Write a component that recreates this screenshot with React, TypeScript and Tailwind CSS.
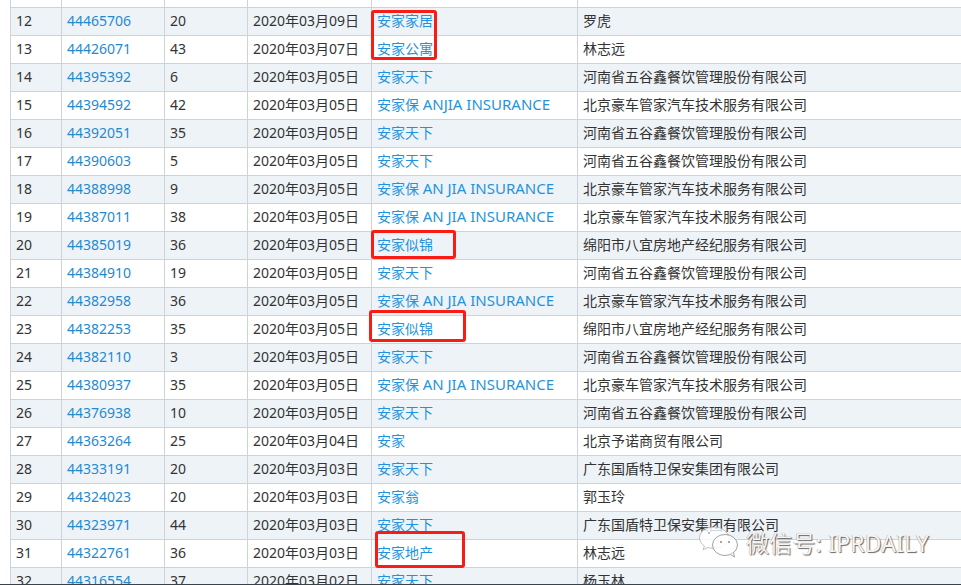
const rows = [
  ["12", "44465706", "20", "2020年03月09日", "安家家居", "罗虎"],
  ["13", "44426071", "43", "2020年03月07日", "安家公寓", "林志远"],
  ["14", "44395392", "6", "2020年03月05日", "安家天下", "河南省五谷鑫餐饮管理股份有限公司"],
  ["15", "44394592", "42", "2020年03月05日", "安家保 ANJIA INSURANCE", "北京豪车管家汽车技术服务有限公司"],
  ["16", "44392051", "35", "2020年03月05日", "安家天下", "河南省五谷鑫餐饮管理股份有限公司"],
  ["17", "44390603", "5", "2020年03月05日", "安家天下", "河南省五谷鑫餐饮管理股份有限公司"],
  ["18", "44388998", "9", "2020年03月05日", "安家保 AN JIA INSURANCE", "北京豪车管家汽车技术服务有限公司"],
  ["19", "44387011", "38", "2020年03月05日", "安家保 AN JIA INSURANCE", "北京豪车管家汽车技术服务有限公司"],
  ["20", "44385019", "36", "2020年03月05日", "安家似锦", "绵阳市八宜房地产经纪服务有限公司"],
  ["21", "44384910", "19", "2020年03月05日", "安家天下", "河南省五谷鑫餐饮管理股份有限公司"],
  ["22", "44382958", "36", "2020年03月05日", "安家保 AN JIA INSURANCE", "北京豪车管家汽车技术服务有限公司"],
  ["23", "44382253", "35", "2020年03月05日", "安家似锦", "绵阳市八宜房地产经纪服务有限公司"],
  ["24", "44382110", "3", "2020年03月05日", "安家天下", "河南省五谷鑫餐饮管理股份有限公司"],
  ["25", "44380937", "35", "2020年03月05日", "安家保 AN JIA INSURANCE", "北京豪车管家汽车技术服务有限公司"],
  ["26", "44376938", "10", "2020年03月05日", "安家天下", "河南省五谷鑫餐饮管理股份有限公司"],
  ["27", "44363264", "25", "2020年03月04日", "安家", "北京予诺商贸有限公司"],
  ["28", "44333191", "20", "2020年03月03日", "安家天下", "广东国盾特卫保安集团有限公司"],
  ["29", "44324023", "20", "2020年03月03日", "安家翁", "郭玉玲"],
  ["30", "44323971", "44", "2020年03月03日", "安家天下", "广东国盾特卫保安集团有限公司"],
  ["31", "44322761", "36", "2020年03月03日", "安家地产", "林志远"],
  ["32", "44316554", "37", "2020年03月02日", "安家天下", "杨玉林"],
];

// the latin part of a mark name sits a bit larger than the chinese part
function MarkName({ name }: { name: string }) {
  const at = name.indexOf(" ");
  if (at < 0) return <>{name}</>;
  return (
    <>
      {name.slice(0, at)} <span className="text-[15px]">{name.slice(at + 1)}</span>
    </>
  );
}

function Row({ cells, shaded }: { cells: string[]; shaded: boolean }) {
  return (
    <div className={`flex h-[28px] shrink-0 border-b border-[#cfd2d6] leading-[25px] ${shaded ? "bg-[#eef3f8]" : "bg-white"}`}>
      <div className="w-[51px] shrink-0 border-r border-[#cfd2d6] pl-[5px] text-[#333]">{cells[0]}</div>
      <div className="w-[103px] shrink-0 border-r border-[#cfd2d6] pl-[5px] text-[#1f8ad0]">{cells[1]}</div>
      <div className="w-[83px] shrink-0 border-r border-[#cfd2d6] pl-[5px] text-[#333]">{cells[2]}</div>
      <div className="w-[124px] shrink-0 border-r border-[#cfd2d6] pl-[5px] text-[#333]">{cells[3]}</div>
      <div className="w-[206px] shrink-0 border-r border-[#cfd2d6] pl-[5px] text-[#1f94dc]">
        <MarkName name={cells[4]} />
      </div>
      <div className="min-w-0 flex-1 whitespace-nowrap pl-[5px] text-[#333]">{cells[5]}</div>
    </div>
  );
}

function WeChatIcon() {
  return (
    <svg width="42" height="34" viewBox="0 0 42 34" fill="none" className="shrink-0">
      <path d="M16 1C8 1 1.500 5.800 1.500 11.800c0 3.300 1.900 6.200 4.900 8.200l-1.300 3.800 4.700-2.300c1.900.5 4 .8 6.200.8 1 0 2-.1 3-.2C27 20 32 16 31 11 29.500 5.500 23.500 1 16 1Z" fill="#ffffff" fillOpacity="0.8" stroke="#a5a5a5" strokeWidth="0.7" />
      <ellipse cx="27" cy="19" rx="12.500" ry="10.500" fill="#ffffff" fillOpacity="0.85" stroke="#8a8a8a" strokeWidth="0.8" />
      <path d="M32.500 28.500l4 2.500-1-4.500" fill="#ffffff" stroke="#8a8a8a" strokeWidth="0.8" />
      <circle cx="23" cy="16" r="1" fill="#888" />
      <circle cx="31" cy="16" r="1" fill="#888" />
      <circle cx="11" cy="7" r="1" fill="#aaa" />
    </svg>
  );
}

export default function App() {
  return (
    <div className="relative h-[585px] w-[961px] overflow-hidden bg-white font-['Noto_Sans','Noto_Sans_CJK_SC',sans-serif] text-[14px]">
      <div className="flex h-[584px] flex-col overflow-hidden pl-[10px]">
        <div className="flex h-[8px] shrink-0 border-b border-l border-[#cfd2d6]">
          <div className="w-[51px] shrink-0 border-r border-[#cfd2d6]" />
          <div className="w-[103px] shrink-0 border-r border-[#cfd2d6]" />
          <div className="w-[83px] shrink-0 border-r border-[#cfd2d6]" />
          <div className="w-[124px] shrink-0 border-r border-[#cfd2d6]" />
          <div className="w-[206px] shrink-0 border-r border-[#cfd2d6]" />
        </div>
        <div className="flex flex-col border-l border-[#cfd2d6]">
          {rows.map((cells, i) => (
            <Row key={cells[0]} cells={cells} shaded={i % 2 === 0} />
          ))}
        </div>
      </div>
      <div className="h-px bg-[#3a424c]" />

      {/* red marker boxes drawn over the screenshot */}
      <div className="absolute left-[371px] top-[10px] h-[50px] w-[66px] rounded-[3px] border-[3px] border-[#f81c14]" />
      <div className="absolute left-[371px] top-[230px] h-[29px] w-[85px] rounded-[3px] border-[3px] border-[#f81c14]" />
      <div className="absolute left-[369px] top-[310px] h-[32px] w-[97px] rounded-[3px] border-[3px] border-[#f81c14]" />
      <div className="absolute left-[375px] top-[531px] h-[37px] w-[90px] rounded-[3px] border-[3px] border-[#f81c14]" />

      {/* watermark */}
      <div className="absolute left-[698px] top-[526px] flex items-center gap-[6px]">
        <WeChatIcon />
        <span className="whitespace-nowrap text-[23px] leading-[30px] tracking-[0.2px] text-[#f4f4f4] [text-shadow:1px_1px_1px_rgba(0,0,0,0.6),-0.5px_-0.5px_0_rgba(0,0,0,0.3)]">
          微信号: IPRDAILY
        </span>
      </div>
    </div>
  );
}
